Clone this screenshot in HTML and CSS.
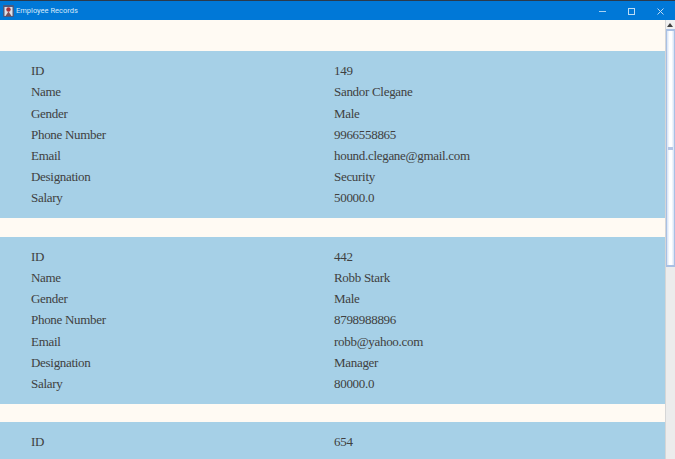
FILE: index.html
```html
<!DOCTYPE html>
<html lang="en">
<head>
    <meta charset="UTF-8">
    <title>Employee Records</title>
    <link rel="stylesheet" href="styles.css">
</head>
<body>
    <div class="titlebar">
        <svg class="app-icon" width="11" height="12" viewBox="0 0 11 12">
            <rect width="11" height="12" rx="1" fill="#4a5a80"/>
            <rect x="1.5" y="2" width="8" height="9" fill="#dfe0e6"/>
            <circle cx="5.5" cy="4.5" r="2.2" fill="#a8323a"/>
            <path d="M2.5 11 L5.5 6.5 L8.5 11 Z" fill="#7a5058"/>
        </svg>
        <span class="title">Employee Records</span>
        <div class="controls">
            <svg width="29" height="20" viewBox="0 0 29 20"><path d="M11 10.5h7" stroke="#a9d2f2" fill="none"/></svg>
            <svg width="29" height="20" viewBox="0 0 29 20"><rect x="11.5" y="7.5" width="6" height="6" stroke="#bcdcf5" fill="none"/></svg>
            <svg width="29" height="20" viewBox="0 0 29 20"><path d="M11.5 7.5 l6 6 M17.5 7.5 l-6 6" stroke="#bcdcf5" fill="none"/></svg>
        </div>
    </div>
    <div class="window">
        <div class="list">
            <div class="card">
                <div class="row"><span>ID</span><span>149</span></div>
                <div class="row"><span>Name</span><span>Sandor Clegane</span></div>
                <div class="row"><span>Gender</span><span>Male</span></div>
                <div class="row"><span>Phone Number</span><span>9966558865</span></div>
                <div class="row"><span>Email</span><span>hound.clegane@gmail.com</span></div>
                <div class="row"><span>Designation</span><span>Security</span></div>
                <div class="row"><span>Salary</span><span>50000.0</span></div>
            </div>
            <div class="card">
                <div class="row"><span>ID</span><span>442</span></div>
                <div class="row"><span>Name</span><span>Robb Stark</span></div>
                <div class="row"><span>Gender</span><span>Male</span></div>
                <div class="row"><span>Phone Number</span><span>8798988896</span></div>
                <div class="row"><span>Email</span><span>robb@yahoo.com</span></div>
                <div class="row"><span>Designation</span><span>Manager</span></div>
                <div class="row"><span>Salary</span><span>80000.0</span></div>
            </div>
            <div class="card">
                <div class="row"><span>ID</span><span>654</span></div>
                <div class="row"><span>Name</span><span>Margery Tyrell</span></div>
            </div>
        </div>
        <div class="scrollbar">
            <div class="arrow"></div>
            <div class="thumb"><div class="grip"></div></div>
        </div>
    </div>
</body>
</html>
```

FILE: styles.css
```css
html, body {
    height: 100%;
}

body {
    margin: 0;
    display: flex;
    flex-direction: column;
    overflow: hidden;
    background-color: #fffaf3;
}

.titlebar {
    height: 19px;
    flex: none;
    display: flex;
    align-items: center;
    border-top: 1px solid #2b3a4c;
    background-color: #0078d7;
    color: #d5e9f9;
    font-family: Roboto, sans-serif;
    font-size: 7.5px;
}

.app-icon {
    margin-left: 3px;
    margin-right: 2px;
}

.controls {
    margin-left: auto;
    display: flex;
}

.window {
    flex: 1;
    min-height: 0;
    display: flex;
}

.list {
    flex: 1;
    padding-top: 31px;
    overflow: hidden;
}

.card {
    height: 148px;
    padding: 9.2px 0 9.8px;
    margin-bottom: 18.6px;
    background-color: #a6d0e7;
    color: #404040;
    font-family: "Liberation Serif", serif;
    font-size: 13px;
    letter-spacing: -0.3px;
}

.row {
    height: 21.2px;
    line-height: 21.2px;
    display: grid;
    grid-template-columns: 303px 1fr;
    padding-left: 31px;
}

.scrollbar {
    width: 9px;
    flex: none;
    display: flex;
    flex-direction: column;
    border-left: 1px solid #d6d6d6;
    background-color: #ececec;
}

.arrow {
    height: 9px;
    background: #f0f0f0;
    position: relative;
}

.arrow::after {
    content: "";
    position: absolute;
    left: 1px;
    top: 3px;
    border-left: 3px solid transparent;
    border-right: 3px solid transparent;
    border-bottom: 4px solid #404040;
}

.thumb {
    height: 238px;
    box-sizing: border-box;
    border: 1px solid #a9c0e4;
    border-top-width: 2px;
    border-bottom-width: 2px;
    background: linear-gradient(to right, #d4e2f6, #ffffff 35%, #ffffff 65%, #d4e2f6);
    position: relative;
}

.grip {
    position: absolute;
    left: 1px;
    right: 1px;
    top: 116px;
    height: 3px;
    background-color: #b4c6e6;
}
```
